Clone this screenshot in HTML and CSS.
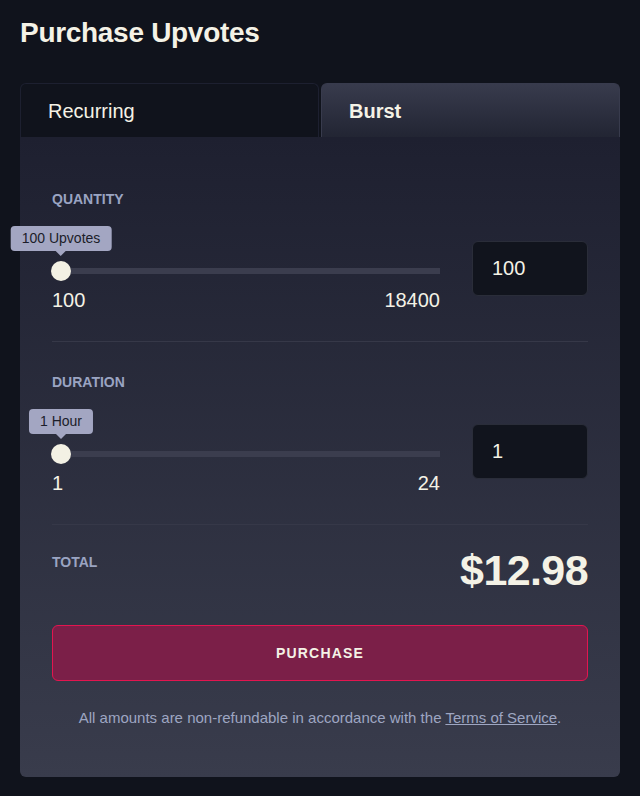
FILE: index.html
```html
<!DOCTYPE html>
<html lang="en">
  <head>
    <meta charset="UTF-8" />
    <meta name="viewport" content="width=device-width, initial-scale=1.0" />
    <title>Purchase Upvotes</title>
    <link rel="stylesheet" href="styles.css">
  </head>
  <body>
    <h1 class="page-title">Purchase Upvotes</h1>

    <div class="card">
      <div class="tabs">
        <div class="tab">Recurring</div>
        <div class="tab active">Burst</div>
      </div>

      <div class="card-body">
        <div class="section">
          <div class="label">QUANTITY</div>
          <div class="row">
            <div class="range">
              <div class="slider">
                <div class="track"></div>
                <div class="thumb">
                  <span class="tip">100 Upvotes</span>
                </div>
              </div>
              <div class="ends">
                <span>100</span>
                <span>18400</span>
              </div>
            </div>
            <div class="value-box">100</div>
          </div>
        </div>

        <div class="section">
          <div class="label">DURATION</div>
          <div class="row">
            <div class="range">
              <div class="slider">
                <div class="track"></div>
                <div class="thumb">
                  <span class="tip">1 Hour</span>
                </div>
              </div>
              <div class="ends">
                <span>1</span>
                <span>24</span>
              </div>
            </div>
            <div class="value-box">1</div>
          </div>
        </div>

        <div class="total">
          <div class="label">TOTAL</div>
          <div class="price">$12.98</div>
        </div>

        <button class="purchase-btn">PURCHASE</button>

        <p class="note">
          All amounts are non-refundable in accordance with the
          <a href="#">Terms of Service</a>.
        </p>
      </div>
    </div>
  </body>
</html>
```

FILE: styles.css
```css
body {
  margin: 0;
  padding: 0 20px;
  background: #10131c;
  color: #f4f2e6;
  font-family: "Liberation Sans", Arial, sans-serif;
}
.page-title {
  margin: 0;
  padding-top: 17px;
  font-size: 28px;
  line-height: 32px;
  letter-spacing: -0.3px;
  font-weight: bold;
}
.card {
  margin-top: 34px;
}
.tabs {
  display: grid;
  grid-template-columns: 1fr 1fr;
  gap: 2px;
}
.tab {
  height: 54px;
  box-sizing: border-box;
  padding-left: 27px;
  padding-top: 2px;
  display: flex;
  align-items: center;
  font-size: 20px;
  background: #10131c;
  border: 1px solid #1d2030;
  border-bottom: none;
  border-radius: 6px 6px 0 0;
}
.tab.active {
  font-weight: bold;
  background: linear-gradient(#383b4d, #222533);
  border-color: #383b4d;
}
.card-body {
  padding: 22px 32px 51px;
  background: linear-gradient(#1e2030, #393c4c);
  border-radius: 0 0 6px 6px;
}
.section {
  padding: 33px 0 30px;
  border-bottom: 1px solid #363848;
}
.label {
  font-size: 14px;
  line-height: 14px;
  font-weight: bold;
  color: #9aa4c2;
}
.row {
  display: flex;
  align-items: center;
  gap: 32px;
  margin-top: 20px;
}
.range {
  flex: 1;
}
.slider {
  position: relative;
  height: 20px;
  margin-top: 35px;
  display: flex;
  align-items: center;
}
.track {
  flex: 1;
  height: 6px;
  margin-left: 9px;
  background: #3b3d4e;
}
.thumb {
  position: absolute;
  left: -1px;
  top: 0;
  width: 20px;
  height: 20px;
  border-radius: 50%;
  background: #f3f1e4;
}
.tip {
  position: absolute;
  bottom: 30px;
  left: 50%;
  transform: translateX(-50%);
  width: max-content;
  white-space: nowrap;
  padding: 4px 11px;
  font-size: 14px;
  line-height: 17px;
  color: #1b1d29;
  background: #a3a6c2;
  border-radius: 4px;
}
.tip::after {
  content: "";
  position: absolute;
  top: 100%;
  left: 50%;
  margin-left: -5px;
  border: 5px solid transparent;
  border-top-color: #a3a6c2;
  border-bottom: none;
}
.ends {
  display: flex;
  justify-content: space-between;
  margin-top: 8px;
  font-size: 20px;
  line-height: 22px;
}
.value-box {
  width: 116px;
  height: 55px;
  box-sizing: border-box;
  padding-left: 19px;
  display: flex;
  align-items: center;
  font-size: 20px;
  background: #11141d;
  border: 1px solid #2a2d39;
  border-radius: 6px;
}
.total {
  display: flex;
  justify-content: space-between;
  align-items: flex-start;
  padding-top: 30px;
}
.price {
  font-size: 43px;
  line-height: 46px;
  font-weight: bold;
  letter-spacing: -0.6px;
  margin-top: -8px;
}
.purchase-btn {
  display: block;
  width: 100%;
  height: 56px;
  margin-top: 32px;
  font-family: inherit;
  font-size: 14px;
  font-weight: bold;
  letter-spacing: 1.2px;
  color: #f4f2e6;
  background: #7b1f48;
  border: 1px solid #e3154f;
  border-radius: 6px;
}
.note {
  margin: 28px 0 0;
  text-align: center;
  font-size: 15px;
  line-height: 17px;
  color: #9ea6c2;
}
.note a {
  color: inherit;
}
```
